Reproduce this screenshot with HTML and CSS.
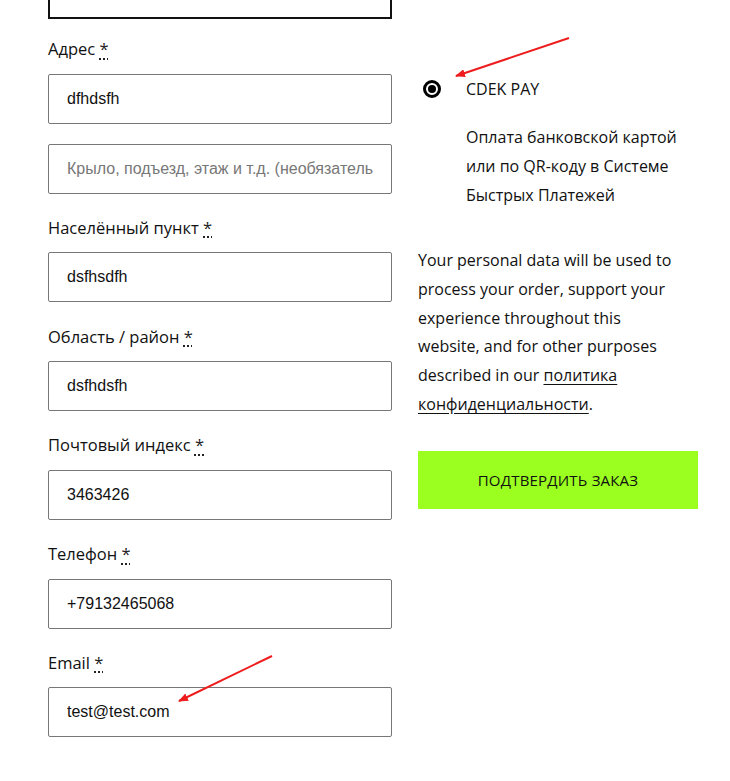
FILE: index.html
```html
<!DOCTYPE html>
<html lang="ru">
<head>
<meta charset="utf-8">
<link rel="stylesheet" href="styles.css">
</head>
<body>
<div class="page">
  <div class="form-col">
    <div class="field field-top">
      <div class="input input-focus"></div>
    </div>
    <div class="field">
      <div class="label">Адрес <abbr class="req">*</abbr></div>
      <div class="input"><span class="val">dfhdsfh</span></div>
      <div class="input input-second"><span class="val placeholder">Крыло, подъезд, этаж и т.д. (необязательно)</span></div>
    </div>
    <div class="field">
      <div class="label">Населённый пункт <abbr class="req">*</abbr></div>
      <div class="input"><span class="val">dsfhsdfh</span></div>
    </div>
    <div class="field">
      <div class="label">Область / район <abbr class="req">*</abbr></div>
      <div class="input"><span class="val">dsfhdsfh</span></div>
    </div>
    <div class="field">
      <div class="label">Почтовый индекс <abbr class="req">*</abbr></div>
      <div class="input"><span class="val">3463426</span></div>
    </div>
    <div class="field">
      <div class="label">Телефон <abbr class="req">*</abbr></div>
      <div class="input"><span class="val">+79132465068</span></div>
    </div>
    <div class="field">
      <div class="label">Email <abbr class="req">*</abbr></div>
      <div class="input"><span class="val">test@test.com</span></div>
    </div>
  </div>
  <div class="pay-col">
    <div class="method">
      <span class="radio"><span class="radio-dot"></span></span>
      <span class="method-name">CDEK PAY</span>
    </div>
    <p class="method-desc">Оплата банковской картой или по QR-коду в Системе Быстрых Платежей</p>
    <p class="privacy">Your personal data will be used to<br>process your order, support your<br>experience throughout this<br>website, and for other purposes<br>described in our <a href="#" class="link">политика</a><br><a href="#" class="link">конфиденциальности</a>.</p>
    <button class="submit">ПОДТВЕРДИТЬ ЗАКАЗ</button>
  </div>
</div>
<svg class="arrows" width="730" height="781" viewBox="0 0 730 781">
  <defs>
    <marker id="ah" markerWidth="10" markerHeight="8" refX="9" refY="4" orient="auto" markerUnits="userSpaceOnUse">
      <path d="M0,0 L10,4 L0,8 Z" fill="#ee1c1c"/>
    </marker>
  </defs>
  <line x1="569" y1="38" x2="456" y2="76" stroke="#ee1c1c" stroke-width="2" marker-end="url(#ah)"/>
  <line x1="272" y1="656" x2="179" y2="701" stroke="#ee1c1c" stroke-width="2" marker-end="url(#ah)"/>
</svg>
</body>
</html>
```
FILE: styles.css
```css
html, body {
  margin: 0;
  padding: 0;
  background: #fff;
}
body {
  width: 730px;
  height: 781px;
  overflow: hidden;
  position: relative;
  font-family: "Open Sans", "Noto Sans", sans-serif;
  color: #111;
}
.page {
  display: flex;
  gap: 26px;
  padding-left: 48px;
}
.form-col {
  width: 344px;
  display: flex;
  flex-direction: column;
  gap: 20.25px;
  margin-top: -31px;
}
.field {
  display: flex;
  flex-direction: column;
}
.field-top {
  margin-bottom: -4.25px;
}
.label {
  font-size: 16.5px;
  line-height: 25.5px;
  padding-top: 1px;
  margin-bottom: 12px;
  color: #111;
  white-space: nowrap;
}
.req {
  text-decoration: underline dotted;
  text-decoration-thickness: 2px;
  text-underline-offset: 3px;
  color: #222;
}
.input {
  box-sizing: border-box;
  height: 50px;
  border: 1px solid #777;
  border-radius: 2px;
  padding: 0 18px;
  display: flex;
  align-items: center;
  font-family: "Liberation Sans", Arial, sans-serif;
  font-size: 16px;
  color: #111;
}
.val {
  flex: 1;
  min-width: 0;
  white-space: nowrap;
  overflow: hidden;
}
.input-focus {
  border: 2px solid #111;
  border-radius: 0;
}
.input-second {
  margin-top: 20px;
}
.placeholder {
  color: #777;
}
.pay-col {
  width: 280px;
  padding-top: 74.5px;
  font-size: 16px;
  line-height: 29px;
}
.method {
  display: flex;
  align-items: center;
  height: 29px;
}
.radio {
  box-sizing: border-box;
  width: 18px;
  height: 18px;
  margin-left: 5px;
  border: 3px solid #000;
  border-radius: 50%;
  display: flex;
  align-items: center;
  justify-content: center;
}
.radio-dot {
  width: 8px;
  height: 8px;
  border-radius: 50%;
  background: #000;
}
.method-name {
  margin-left: 25px;
}
.method-desc {
  margin: 19.5px 0 0 48px;
}
.privacy {
  margin: 36px 0 0 0;
  line-height: 28.8px;
  white-space: nowrap;
}
.link {
  color: #111;
  text-decoration: underline;
  text-underline-offset: 3px;
}
.submit {
  display: block;
  margin-top: 32px;
  width: 280px;
  height: 58px;
  border: 0;
  background: #9bff1f;
  font-family: "Open Sans", "Noto Sans", sans-serif;
  font-size: 15px;
  color: #111;
  letter-spacing: 0.2px;
}
.arrows {
  position: absolute;
  left: 0;
  top: 0;
  pointer-events: none;
}
```
